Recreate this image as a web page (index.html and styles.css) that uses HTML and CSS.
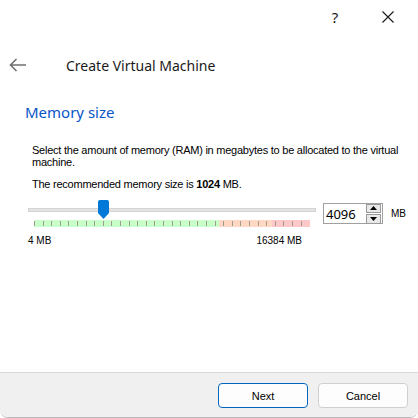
FILE: index.html
```html
<!DOCTYPE html>
<html>
<head>
<meta charset="utf-8">
<link rel="stylesheet" href="styles.css">
</head>
<body>
<div class="window">
  <div class="titlebar">
    <span class="help">?</span>
    <span class="close">
      <svg width="12" height="12" viewBox="0 0 12 12"><path d="M0.5 0.5 L11.5 11.5 M11.5 0.5 L0.5 11.5" stroke="#1a1a1a" stroke-width="1.1" fill="none"/></svg>
    </span>
  </div>
  <div class="header">
    <span class="back">
      <svg width="18" height="14" viewBox="0 0 18 14"><path d="M17 7 H1.5 M7.5 1 L1.5 7 L7.5 13" stroke="#707070" stroke-width="1.6" fill="none"/></svg>
    </span>
    <span class="title">Create Virtual Machine</span>
  </div>
  <div class="content">
    <h2 class="section">Memory size</h2>
    <p class="desc">Select the amount of memory (RAM) in megabytes to be allocated to the virtual<br>machine.</p>
    <p class="desc rec">The recommended memory size is <b>1024</b> MB.</p>
    <div class="slider-row">
      <div class="slider">
        <div class="groove"></div>
        <div class="handle">
          <svg width="11" height="19" viewBox="0 0 11 19"><path d="M0 2 Q0 0 2 0 H9 Q11 0 11 2 V13 L5.5 19 L0 13 Z" fill="#0078d7"/></svg>
        </div>
        <div class="ticks"></div>
      </div>
      <div class="spin">
        <span class="spin-val">4096</span>
        <span class="spin-btns">
          <span class="spin-btn"><svg width="7" height="4" viewBox="0 0 7 4"><path d="M0 4 L3.5 0 L7 4 Z" fill="#000"/></svg></span>
          <span class="spin-btn"><svg width="7" height="4" viewBox="0 0 7 4"><path d="M0 0 L3.5 4 L7 0 Z" fill="#000"/></svg></span>
        </span>
      </div>
      <span class="unit">MB</span>
    </div>
    <div class="labels">
      <span>4 MB</span>
      <span>16384 MB</span>
    </div>
  </div>
  <div class="footer">
    <button class="btn primary">Next</button>
    <button class="btn">Cancel</button>
  </div>
</div>
</body>
</html>
```
FILE: styles.css
```css
html, body {
  margin: 0;
  padding: 0;
  background: #ffffff;
}
body {
  width: 418px;
  height: 418px;
  overflow: hidden;
}
.window {
  width: 418px;
  height: 417px;
  display: flex;
  flex-direction: column;
  background: #ffffff;
  border-radius: 0 8px 8px 8px;
  border-bottom: 1px solid #b8b8b8;
  overflow: hidden;
  font-family: "Liberation Sans", Arial, sans-serif;
  color: #000;
}
.titlebar {
  height: 34px;
  display: flex;
  align-items: center;
  justify-content: flex-end;
}
.help {
  font-family: "Noto Sans", sans-serif;
  font-size: 15px;
  color: #1a1a1a;
  width: 20px;
  text-align: center;
  margin-right: 37px;
}
.close {
  display: flex;
  margin-right: 24px;
}
.header {
  margin-top: 16px;
  height: 30px;
  display: flex;
  align-items: center;
}
.back {
  display: flex;
  margin-left: 9px;
  width: 57px;
}
.title {
  font-family: "Noto Sans", sans-serif;
  font-size: 14px;
  color: #1a1a1a;
}
.content {
  padding-left: 25px;
}
.section {
  margin: 22px 0 0 0;
  font-family: "Noto Sans", sans-serif;
  font-weight: normal;
  font-size: 15px;
  line-height: 20px;
  color: #0955c8;
}
.desc {
  margin: 22px 0 0 7px;
  font-size: 11px;
  line-height: 12px;
  letter-spacing: -0.24px;
}
.desc.rec {
  margin-top: 10px;
}
.slider-row {
  margin-top: 10px;
  margin-left: 3px;
  display: flex;
  align-items: flex-start;
}
.slider {
  position: relative;
  width: 288px;
}
.groove {
  margin-top: 8px;
  height: 2px;
  background: #e4e4e4;
  border: 1px solid #d4d4d4;
}
.handle {
  position: absolute;
  left: 70px;
  top: 0;
  display: flex;
}
.ticks {
  margin: 8px 0 0 6px;
  width: 276px;
  height: 7px;
  background:
    repeating-linear-gradient(to right, #a09a90 0 1px, transparent 1px 8.6px) 0 1px / 268px 5px no-repeat,
    linear-gradient(to right, #c8ffc8 0 185px, #ffd8c4 185px 238px, #ffc8c8 238px 276px);
}
.spin {
  margin: 3px 0 0 7px;
  width: 58px;
  height: 19px;
  border: 1px solid #a0a0a0;
  display: flex;
  align-items: center;
  justify-content: space-between;
}
.spin-val {
  font-family: "Noto Sans", sans-serif;
  font-size: 13px;
  margin-left: 2px;
}
.spin-btns {
  display: flex;
  flex-direction: column;
  margin-right: 1px;
  gap: 1px;
}
.spin-btn {
  width: 13px;
  height: 8px;
  background: #e8e8e8;
  border: 1px solid #9a9a9a;
  display: flex;
  align-items: center;
  justify-content: center;
  box-sizing: content-box;
}
.spin-btn:first-child {
  height: 7px;
}
.unit {
  margin: 8px 0 0 8px;
  font-size: 10px;
  line-height: 12px;
}
.labels {
  margin: 8px 0 0 3px;
  width: 274px;
  display: flex;
  justify-content: space-between;
  font-size: 10px;
  line-height: 12px;
}
.footer {
  margin-top: auto;
  height: 45px;
  background: #f0f0f0;
  border-top: 1px solid #dadada;
  display: flex;
  justify-content: flex-end;
  align-items: flex-start;
  padding: 10px 10px 0 0;
  box-sizing: border-box;
  gap: 10px;
}
.btn {
  width: 90px;
  height: 25px;
  border: 1px solid #d0d0d0;
  border-radius: 4px;
  background: #fdfdfd;
  font-family: "Liberation Sans", Arial, sans-serif;
  font-size: 11px;
  color: #000;
  padding: 0;
}
.btn.primary {
  border-color: #0067c0;
}
```
